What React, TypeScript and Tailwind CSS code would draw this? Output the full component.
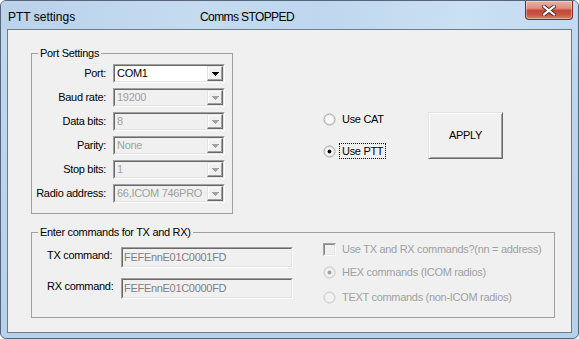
import React from "react";

function Triangle({ enabled }: { enabled: boolean }) {
  const c = enabled ? "#000000" : "#a0a0a0";
  return (
    <svg width="7" height="4" viewBox="0 0 7 4" shapeRendering="crispEdges">
      <rect x="0" y="0" width="7" height="1" fill={c} />
      <rect x="1" y="1" width="5" height="1" fill={c} />
      <rect x="2" y="2" width="3" height="1" fill={c} />
      <rect x="3" y="3" width="1" height="1" fill={c} />
    </svg>
  );
}

function Combo({ value, enabled = false }: { value: string; enabled?: boolean }) {
  return (
    <div className="flex h-[19px] w-[112px] border border-t-[#a0a0a0] border-l-[#a0a0a0] border-r-white border-b-white">
      <div
        className={`flex min-w-0 flex-1 border border-t-[#696969] border-l-[#696969] border-r-[#e3e3e3] border-b-[#e3e3e3] ${
          enabled ? "bg-white" : "bg-[#f0f0f0]"
        }`}
      >
        <span
          className={`min-w-0 flex-1 overflow-hidden whitespace-nowrap pl-[2px] leading-[15px] ${
            enabled ? "text-black" : "text-[#a0a0a0]"
          }`}
        >
          {value}
        </span>
        <span className="flex w-[16px] shrink-0 items-center justify-center border border-t-[#e3e3e3] border-l-[#e3e3e3] border-r-[#696969] border-b-[#696969] bg-[#f0f0f0] shadow-[inset_-1px_-1px_0_#a0a0a0,inset_1px_1px_0_#ffffff]">
          <Triangle enabled={enabled} />
        </span>
      </div>
    </div>
  );
}

function TextBox({ value }: { value: string }) {
  return (
    <div className="h-[21px] w-[172px] border border-t-[#a0a0a0] border-l-[#a0a0a0] border-r-white border-b-white">
      <div className="h-full border border-t-[#696969] border-l-[#696969] border-r-[#e3e3e3] border-b-[#e3e3e3] bg-[#f0f0f0] pl-[1px] leading-[17px] text-[#808080]">
        {value}
      </div>
    </div>
  );
}

function Radio({ checked, enabled = true }: { checked: boolean; enabled?: boolean }) {
  return (
    <svg width="13" height="13" viewBox="0 0 13 13" className="shrink-0">
      <circle cx="6.5" cy="6.5" r="5.5" fill={enabled ? "#fdfdfd" : "#f2f2f2"} stroke={enabled ? "#9c9c9c" : "#c4c4c4"} />
      <circle cx="6.5" cy="6.5" r="4.3" fill="none" stroke={enabled ? "#e2e2e2" : "#ebebeb"} />
      {checked && <circle cx="6.5" cy="6.5" r="1.9" fill={enabled ? "#000000" : "#a0a0a0"} />}
    </svg>
  );
}

function CheckBox() {
  return (
    <div className="h-[13px] w-[13px] shrink-0 border border-t-[#a0a0a0] border-l-[#a0a0a0] border-r-white border-b-white">
      <div className="h-full border border-t-[#8a8a8a] border-l-[#8a8a8a] border-r-[#e3e3e3] border-b-[#e3e3e3] bg-[#f0f0f0]" />
    </div>
  );
}

const portRows: { label: string; value: string; enabled?: boolean }[] = [
  { label: "Port:", value: "COM1", enabled: true },
  { label: "Baud rate:", value: "19200" },
  { label: "Data bits:", value: "8" },
  { label: "Parity:", value: "None" },
  { label: "Stop bits:", value: "1" },
  { label: "Radio address:", value: "66,ICOM 746PRO" },
];

export default function App() {
  return (
    <div className="h-[339px] w-[579px] overflow-hidden font-['Liberation_Sans',Arial,sans-serif] text-[11px] tracking-[-0.3px] text-black">
      <div className="flex h-full w-full flex-col rounded-[6px] border border-[#56667a] bg-[linear-gradient(180deg,#c2d9ef_0%,#bcd4ec_40%,#b8d1ea_100%)]">
        {/* title bar */}
        <div className="flex h-[28px] shrink-0 items-start rounded-t-[5px] bg-[linear-gradient(100deg,#bad2ea_0%,#c4dbf0_35%,#bed7ee_55%,#cae0f3_80%,#c2daf0_100%)]">
          <span className="ml-[7px] mt-[9px] w-[192px] text-[12px] leading-[14px] tracking-normal">PTT settings</span>
          <span className="mt-[9px] text-[12px] leading-[14px] tracking-[-0.6px]">Comms STOPPED</span>
          <div className="ml-auto mr-[5px] flex h-[19px] w-[48px] items-center justify-center rounded-b-[4px] border border-t-0 border-[#7a2e24] bg-[linear-gradient(180deg,#e9b3a7_0%,#dc8f80_40%,#c5473a_52%,#c9543f_75%,#dc8270_100%)] shadow-[inset_0_0_0_1px_rgba(255,255,255,0.35)]">
            <svg width="14" height="11" viewBox="0 0 14 11">
              <path d="M2 1.5L12 9.5M12 1.5L2 9.5" stroke="#4a2a26" strokeWidth="4" strokeLinecap="square" />
              <path d="M2 1.5L12 9.5M12 1.5L2 9.5" stroke="#ffffff" strokeWidth="2.2" strokeLinecap="square" />
            </svg>
          </div>
        </div>

        {/* client area */}
        <div className="mx-[6px] mb-[5px] flex-1 border border-[#6f7b88] bg-[#f0f0f0]">
          <div className="pl-[23px] pt-[17px]">
            <div className="flex items-start">
              <fieldset className="w-[202px] border border-[#a0a0a0] pb-[10px]">
                <legend className="ml-[6px] px-[2px] leading-[13px]">Port Settings</legend>
                <div className="grid grid-cols-[74px_112px] items-center gap-x-[7px] gap-y-[5px] pt-[4px]">
                  {portRows.map((r) => (
                    <React.Fragment key={r.label}>
                      <span className="whitespace-nowrap text-right leading-[13px]">{r.label}</span>
                      <Combo value={r.value} enabled={r.enabled} />
                    </React.Fragment>
                  ))}
                </div>
              </fieldset>

              <div className="ml-[90px] mt-[64px] flex w-[105px] flex-col gap-[16px]">
                <div className="flex h-[16px] items-center">
                  <Radio checked={false} />
                  <span className="ml-[3px] border border-transparent px-[2px] leading-[14px]">Use CAT</span>
                </div>
                <div className="flex h-[16px] items-center">
                  <Radio checked />
                  <span className="ml-[3px] border border-dotted border-black px-[2px] leading-[14px]">Use PTT</span>
                </div>
              </div>

              <button className="mt-[65px] h-[47px] w-[75px] border border-t-[#e3e3e3] border-l-[#e3e3e3] border-r-[#696969] border-b-[#696969] bg-[#f0f0f0] text-[11px] leading-[13px] shadow-[inset_1px_1px_0_#ffffff,inset_-1px_-1px_0_#a0a0a0]">
                APPLY
              </button>
            </div>

            <fieldset className="mt-[12px] w-[524px] border border-[#a0a0a0]">
              <legend className="ml-[6px] px-[2px] leading-[13px]">Enter commands for TX and RX)</legend>
              <div className="flex items-start pb-[12px] pt-[2px]">
                <div className="mt-[6px] flex flex-col gap-[10px] pl-[15px]">
                  <div className="flex items-start">
                    <span className="w-[74px] pt-[2px] leading-[13px]">TX command:</span>
                    <TextBox value="FEFEnnE01C0001FD" />
                  </div>
                  <div className="flex items-start">
                    <span className="w-[74px] pt-[2px] leading-[13px]">RX command:</span>
                    <TextBox value="FEFEnnE01C0000FD" />
                  </div>
                </div>

                <div className="ml-[30px] flex flex-col text-[#a0a0a0]">
                  <div className="flex h-[16px] items-center">
                    <CheckBox />
                    <span className="ml-[6px] leading-[14px]">Use TX and RX commands?(nn = address)</span>
                  </div>
                  <div className="mt-[7px] flex h-[16px] items-center">
                    <Radio checked enabled={false} />
                    <span className="ml-[6px] leading-[14px]">HEX commands (ICOM radios)</span>
                  </div>
                  <div className="mt-[9px] flex h-[16px] items-center">
                    <Radio checked={false} enabled={false} />
                    <span className="ml-[6px] leading-[14px]">TEXT commands (non-ICOM radios)</span>
                  </div>
                </div>
              </div>
            </fieldset>
          </div>
        </div>
      </div>
    </div>
  );
}
